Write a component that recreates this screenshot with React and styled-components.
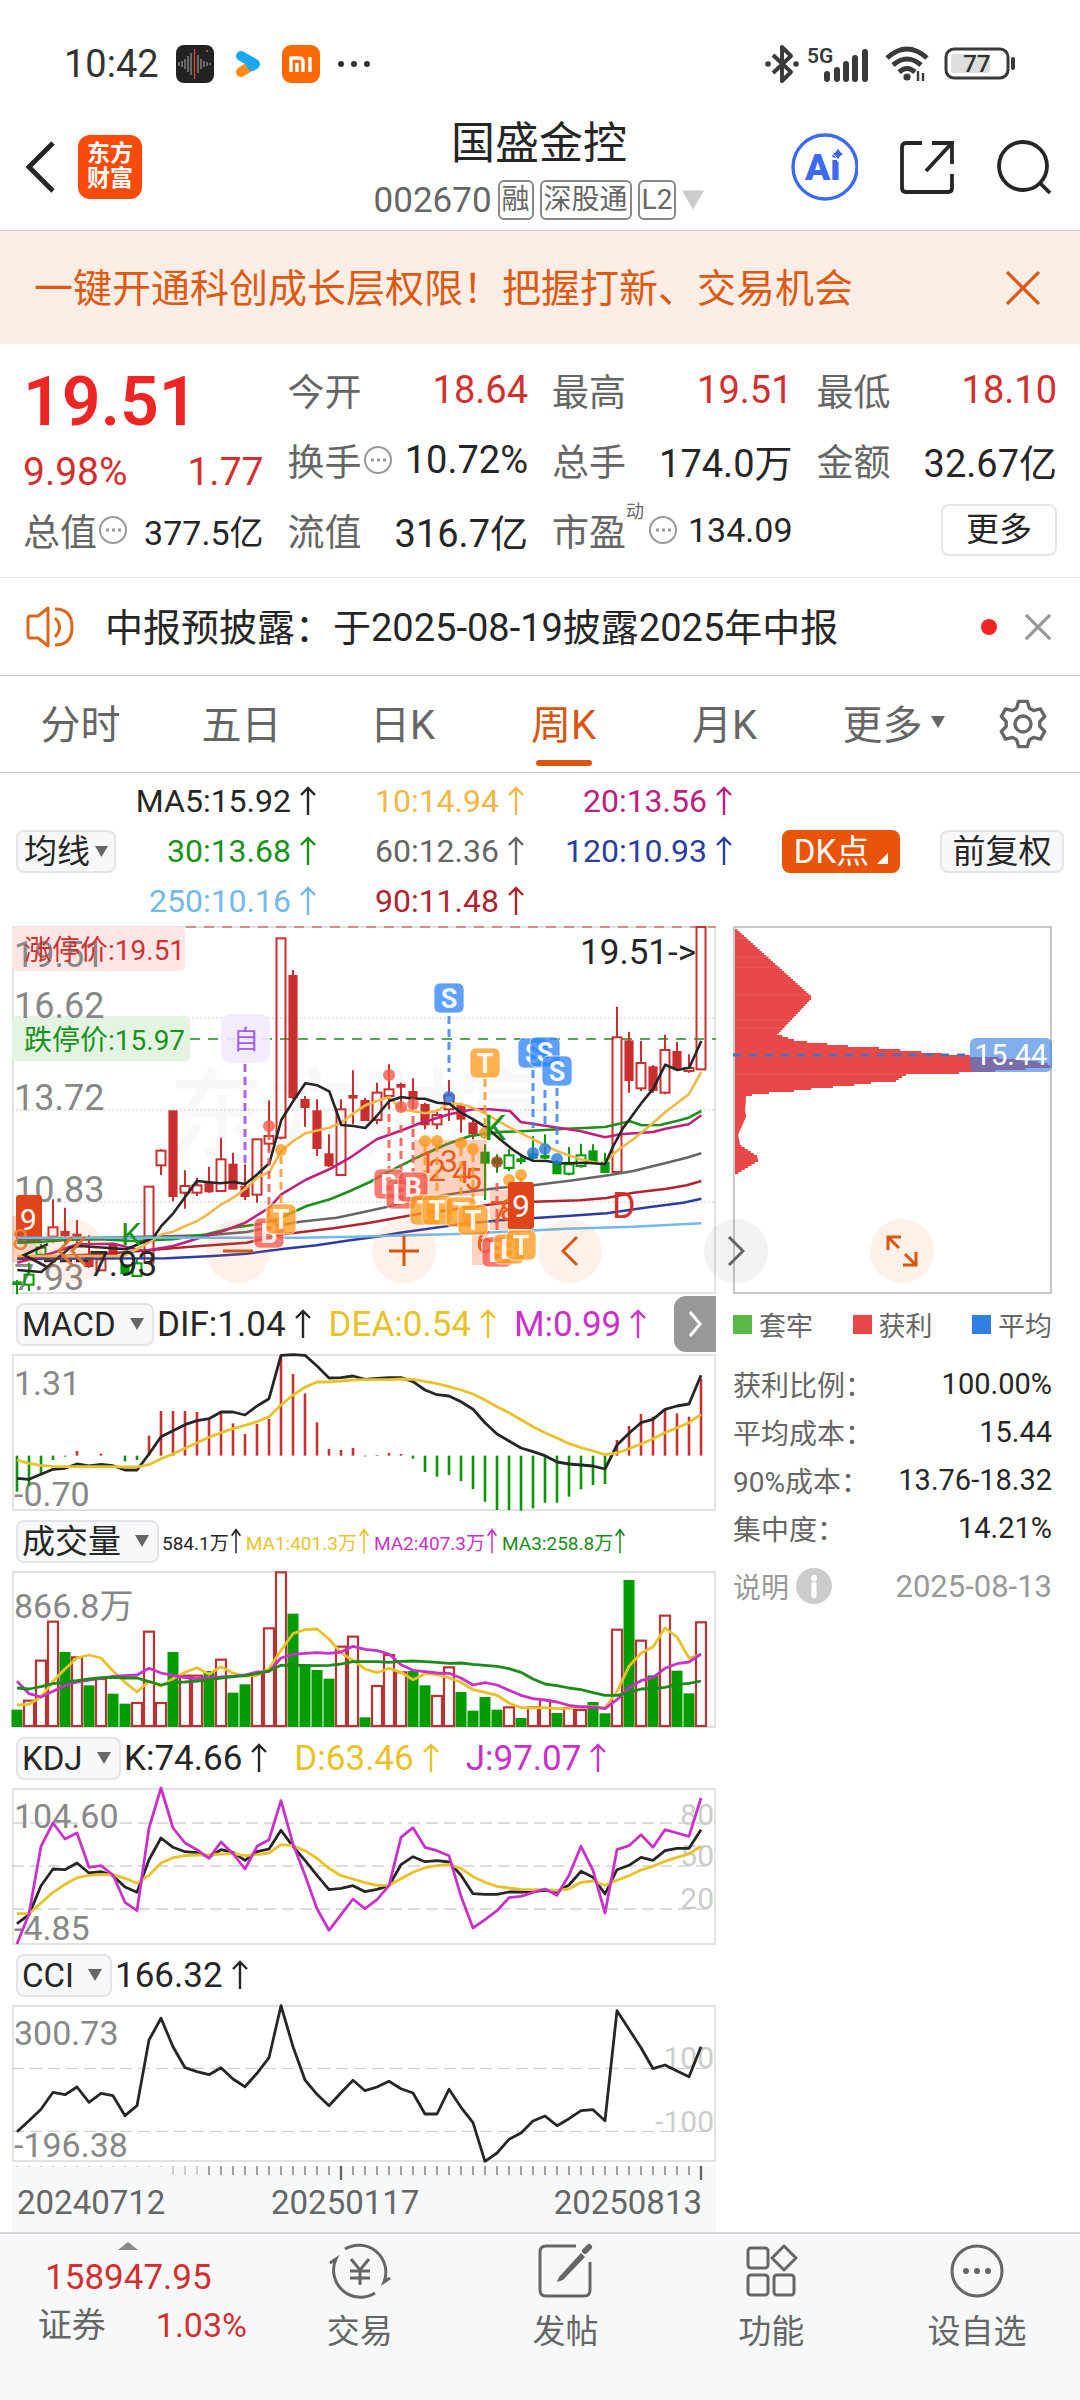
import React from 'react'

import styled, { createGlobalStyle } from 'styled-components';

const GlobalStyle = createGlobalStyle`
* { box-sizing: border-box; }
body {
  margin: 0;
  background: #fff;
  color: #262626;
  font-family: Roboto, "Noto Sans CJK SC", sans-serif;
}
button, select {
  margin: 0;
  padding: 0;
  border: 0;
  background: none;
  color: inherit;
  font: inherit;
  cursor: pointer;
}
svg { display: block; flex-shrink: 0; }
svg text { font-family: Roboto, "Noto Sans CJK SC", sans-serif; }
`;

/* ---------- status bar ---------- */

const StatusBar = styled.div`
display: flex;
justify-content: space-between;
align-items: center;
height: 104px;
padding: 24px 64px 0 64px;
font-size: 38px;
color: #333;
`;

const StatusGroup = styled.div`
display: flex;
align-items: center;
gap: ${p => p.$gap || 14}px;
`;

/* ---------- header ---------- */

const Header = styled.header`
display: grid;
grid-template-columns: 1fr auto 1fr;
align-items: center;
height: 127px;
padding: 0 28px 0 26px;
border-bottom: 1px solid #ccc;
`;

const HeaderSide = styled.div`
display: flex;
align-items: center;
gap: ${p => p.$gap}px;
justify-content: ${p => p.$end ? 'flex-end' : 'flex-start'};
`;

const Logo = styled.div`
width: 64px;
height: 64px;
padding-top: 6px;
border-radius: 12px;
background: #fb4b0a;
color: #fff;
font-size: 23px;
line-height: 25px;
font-weight: 700;
text-align: center;
`;

const TitleBlock = styled.div`
padding-top: 10px;
text-align: center;
`;

const Title = styled.h1`
margin: 0;
font-size: 44px;
line-height: 56px;
font-weight: 400;
`;

const Code = styled.div`
display: flex;
align-items: center;
gap: 6px;
height: 56px;
font-size: 35px;
color: #666;
`;

const Tag = styled.span`
padding: 0 2px;
border: 2px solid #888;
border-radius: 6px;
font-size: 28px;
line-height: 36px;
`;

const IconButton = styled.button`
display: flex;
align-items: center;
justify-content: center;
`;

/* ---------- banner ---------- */

const Banner = styled.div`
display: flex;
align-items: center;
justify-content: space-between;
height: 113px;
padding: 0 40px 0 34px;
background: #fceee6;
color: #dc5a12;
font-size: 39px;
span { padding-bottom: 5px; }
`;

/* ---------- quote ---------- */

const Quote = styled.section`
display: grid;
grid-template-columns: repeat(4, 1fr);
grid-auto-rows: 70px;
column-gap: 24px;
padding: 11px 23px 12px;
border-bottom: 1px solid #e8e8e8;
`;

const PriceBox = styled.div`
grid-row: span 2;
color: #d2302f;
font-size: 39px;
`;

const Price = styled.div`
font-size: 68px;
line-height: 94px;
font-weight: 600;
color: #ee2525;
`;

const Cell = styled.div`
display: flex;
align-items: center;
justify-content: space-between;
`;

const Label = styled.span`
display: flex;
align-items: center;
font-size: 37px;
color: #666;
`;

const Value = styled.span`
font-size: ${p => p.$small ? 34 : 38}px;
color: ${p => p.$red ? '#d2302f' : '#262626'};
white-space: nowrap;
`;

const Sup = styled.sup`
align-self: flex-start;
padding-right: 3px;
font-size: 18px;
line-height: 18px;
`;

const MoreButton = styled.button`
justify-self: end;
align-self: center;
width: 116px;
height: 52px;
border: 2px solid #e6e6e6;
border-radius: 8px;
font-size: 33px;
line-height: 46px;
`;

/* ---------- notice ---------- */

const Notice = styled.div`
display: flex;
align-items: center;
height: 98px;
padding: 0 29px 0 26px;
border-bottom: 1px solid #ccc;
font-size: 38px;
`;

const NoticeText = styled.span`
flex: 1;
padding: 0 0 5px 29px;
`;

const Dot = styled.i`
width: 16px;
height: 16px;
margin-right: 28px;
border-radius: 50%;
background: #ee2525;
`;

/* ---------- period tabs ---------- */

const Tabs = styled.nav`
display: flex;
height: 97px;
border-bottom: 1px solid #ccc;
`;

const Tab = styled.button`
position: relative;
display: flex;
flex: 1 1 161px;
align-items: center;
justify-content: center;
gap: 8px;
padding: 0 0 4px ${p => p.$more ? 16 : 0}px;
font-size: 40px;
color: ${p => p.$active ? '#d9560f' : '#666'};
${p => p.$active && `
&::after {
  content: '';
  position: absolute;
  bottom: 6px;
  width: 56px;
  height: 6px;
  border-radius: 3px;
  background: #d9560f;
}`}
`;

const GearTab = styled(IconButton)`
flex: 1 1 114px;
`;

/* ---------- moving averages ---------- */

const MaRow = styled.div`
display: flex;
align-items: center;
padding: 3px 16px 0 16px;
`;

const MaGrid = styled.div`
display: grid;
grid-template-columns: 200px 208px 208px;
grid-auto-rows: 50px;
justify-items: end;
`;

const Figure = styled.span`
display: flex;
align-items: center;
gap: ${p => p.$size < 30 ? 2 : 9}px;
font-size: ${p => p.$size}px;
color: ${p => p.$color};
white-space: nowrap;
`;

const PickerBox = styled.label`
display: flex;
align-items: center;
gap: ${p => p.$tight ? 5 : 14}px;
height: 43px;
padding: 0 ${p => p.$tight ? 6 : 8}px 0 ${p => p.$tight ? 6 : 4}px;
border: 2px solid #e2e4e8;
border-radius: 8px;
background: #f7f8fa;
font-size: 33px;
select {
  appearance: none;
  line-height: 39px;
  height: 39px;
}
`;

const ChipButton = styled.button`
display: flex;
align-items: center;
justify-content: center;
gap: 8px;
width: ${p => p.$width}px;
height: 43px;
margin-left: ${p => p.$push || '50px'};
border: 2px solid ${p => p.$solid ? '#e8550a' : '#e2e4e8'};
border-radius: 8px;
background: ${p => p.$solid ? '#e8550a' : '#f7f8fa'};
color: ${p => p.$solid ? '#fff' : '#262626'};
font-size: 33px;
line-height: 39px;
`;

/* ---------- charts ---------- */

const ChartArea = styled.main`
position: relative;
display: grid;
grid-template-columns: 704fr 319fr;
column-gap: 17px;
padding: 0 28px 0 12px;
`;

const Chart = styled.svg`
width: 100%;
height: auto;
overflow: visible;
`;

const PanelHead = styled.div`
display: flex;
align-items: center;
height: 60px;
padding-left: 4px;
`;

const PanelFigures = styled.div`
display: flex;
flex: 1;
gap: ${p => p.$gap}px;
padding-left: 3px;
`;

const NextTab = styled.button`
display: flex;
align-items: center;
justify-content: center;
width: 42px;
height: 56px;
border-radius: 12px 0 0 12px;
background: #989898;
`;

const Axis = styled.div`
margin-top: 4px;
height: 66px;
background: #f7f8fa;
`;

const Dates = styled.div`
display: grid;
grid-template-columns: 254fr 190fr 241fr;
padding: 0 14px 0 5px;
font-size: 33px;
line-height: 38px;
color: #666;
span:last-child { justify-self: end; }
`;

const Controls = styled.div`
position: absolute;
top: 293px;
left: 40px;
display: flex;
gap: 102px;
`;

const RoundButton = styled.button`
display: flex;
align-items: center;
justify-content: center;
width: 64px;
height: 64px;
border-radius: 50%;
background: ${p => p.$gray ? 'rgba(90,90,90,.08)' : 'rgba(255,110,40,.1)'};
color: ${p => p.$gray ? '#666' : '#d9560f'};
`;

const ChipLegend = styled.div`
display: flex;
justify-content: space-between;
align-items: center;
height: 60px;
font-size: 27px;
color: #666;
span { display: flex; align-items: center; gap: 7px; }
`;

const Swatch = styled.i`
width: 19px;
height: 19px;
background: ${p => p.$color};
`;

const StatRow = styled.div`
display: flex;
justify-content: space-between;
align-items: center;
height: ${p => p.$last ? 68 : 48}px;
font-size: 28px;
color: ${p => p.$last ? '#999' : '#666'};
b {
  font-size: ${p => p.$last ? 31 : 29}px;
  font-weight: 400;
  color: ${p => p.$last ? '#999' : '#262626'};
}
span { display: flex; align-items: center; gap: 7px; }
`;

const Stats = styled.div`
padding-top: 6px;
`;

/* ---------- bottom bar ---------- */

const BottomBar = styled.footer`
display: flex;
height: 168px;
border-top: 2px solid #d5d7da;
background: #f7f8fa;
color: #666;
`;

const IndexBox = styled.button`
display: flex;
flex: 257;
flex-direction: column;
align-items: center;
padding-top: 8px;
font-size: 35px;
color: #d2302f;
`;

const IndexLine = styled.span`
display: flex;
gap: 50px;
padding-left: 28px;
font-size: 34px;
line-height: 48px;
em { font-style: normal; color: #666; }
`;

const IndexValue = styled.span`
line-height: 46px;
margin-top: 5px;
`;

const BottomItem = styled.button`
display: flex;
flex: 206;
flex-direction: column;
align-items: center;
padding-top: 8px;
font-size: 33px;
line-height: 48px;
svg { margin-bottom: 8px; }
`;

/* ---------- small icons ---------- */

const Up = ({ small }) => (
  <svg width={small ? 10 : 16} height={small ? 26 : 30} viewBox="0 0 16 30" preserveAspectRatio="none" fill="none" stroke="currentColor" strokeWidth="2.4">
    <path d="M8 29V2M1 9L8 2L15 9" />
  </svg>
);

const Down = ({ w = 14, color = '#666' }) => (
  <svg width={w} height={w} viewBox="0 0 14 14" fill={color}><path d="M0 1H14L7 13Z" /></svg>
);

const Cross = ({ size, color, width = 3 }) => (
  <svg width={size} height={size} viewBox="0 0 32 32" stroke={color} strokeWidth={width}><path d="M1 1L31 31M31 1L1 31" /></svg>
);

const Bubble = () => (
  <svg width="30" height="30" viewBox="0 0 30 30" fill="none" stroke="#999" strokeWidth="2">
    <circle cx="16" cy="15" r="13" />
    <path d="M9 15h3M15 15h3M21 15h3" strokeWidth="3" />
  </svg>
);

// six flat teeth round a small ring
const gearPath = () => {
  const pts = [];
  for (let k = 0; k < 6; k++) {
    [[-22, 17], [-11, 23], [11, 23], [22, 17]].forEach(([d, r]) => {
      const a = (k * 60 - 90 + d) * Math.PI / 180;
      pts.push((26 + r * Math.cos(a)).toFixed(1) + ' ' + (26 + r * Math.sin(a)).toFixed(1));
    });
  }
  return 'M' + pts.join('L') + 'Z';
};

const Gear = () => (
  <svg width="52" height="52" viewBox="0 0 52 52" fill="none" stroke="#666" strokeWidth="3.4" strokeLinejoin="round">
    <path d={gearPath()} />
    <circle cx="26" cy="26" r="8" />
  </svg>
);

const Picker = ({ name, tight }) => (
  <PickerBox $tight={tight}>
    <select aria-label={name}><option>{name}</option></select>
    <Down w={tight ? 13 : 14} />
  </PickerBox>
);

/* ---------- chart data ---------- */

const X0 = 5;
const STEP = 12;
const barX = i => X0 + i * STEP;

const scale = top => v => (v - top) / 3;

const linePoints = (values, y) => values.map((v, i) => barX(i) + ',' + y(v).toFixed(1)).join(' ');

// kind, high, open/close top, open/close bottom, low
const candles = [
  ['g', 1112, 1119, 1124, 1155], ['h', 1060, 1096, 1126, 1145], ['h', 1005, 1015, 1036, 1050],
  ['u', 870, 954, 982, 1000], ['f', 895, 968, 978, 1000], ['f', 932, 976, 990, 1002],
  ['f', 978, 1040, 1070, 1075], ['u', 1030, 1050, 1083, 1083], ['f', 1000, 1010, 1034, 1050],
  ['g', 1064, 1068, 1092, 1092], ['h', 1050, 1062, 1100, 1100], ['u', 832, 832, 1060, 1060],
  ['u', 720, 724, 768, 797], ['f', 605, 606, 860, 876], ['u', 783, 830, 850, 898],
  ['u', 805, 828, 850, 860], ['f', 772, 822, 846, 850], ['u', 685, 750, 845, 845],
  ['f', 730, 766, 838, 838], ['f', 765, 832, 860, 872], ['u', 690, 690, 856, 880],
  ['u', 573, 680, 703, 725], ['u', 87, 87, 685, 690], ['f', 182, 200, 563, 570],
  ['f', 560, 572, 593, 652], ['f', 570, 606, 716, 740], ['f', 675, 735, 768, 772],
  ['u', 570, 600, 797, 800], ['f', 483, 560, 565, 645], ['f', 565, 575, 632, 635],
  ['u', 520, 550, 632, 645], ['u', 465, 540, 560, 600], ['f', 520, 527, 532, 600],
  ['f', 507, 548, 568, 600], ['f', 580, 587, 645, 660], ['u', 600, 617, 645, 660],
  ['u', 512, 558, 600, 635], ['f', 580, 590, 628, 670], ['f', 630, 642, 672, 690],
  ['g', 705, 730, 760, 872], ['g', 735, 750, 762, 790], ['h', 720, 738, 776, 785],
  ['g', 740, 750, 755, 765], ['g', 680, 735, 745, 750], ['g', 675, 740, 745, 750],
  ['g', 752, 760, 792, 792], ['h', 713, 765, 793, 798], ['h', 703, 738, 770, 775],
  ['g', 705, 726, 756, 756], ['g', 730, 760, 788, 788], ['u', 292, 384, 788, 788],
  ['f', 368, 396, 512, 550], ['u', 395, 461, 537, 545], ['f', 468, 474, 542, 550],
  ['u', 376, 422, 550, 555], ['f', 398, 428, 475, 480], ['u', 435, 476, 485, 490],
  ['u', 53, 53, 480, 480],
];

const averages = [
  ['#2b3ea0', '52,1048 500,1047 640,1040 740,1033 840,1020 950,1008 1050,993 1130,982 1200,970 1380,945 1500,933 1700,920 1820,912 1950,893 2050,880 2104,868'],
  ['#b0242f', '52,1045 300,1035 480,1020 600,1010 740,1000 850,975 1000,957 1110,940 1250,915 1400,895 1500,882 1600,877 1740,873 1820,866 1900,850 2000,838 2060,828 2104,815'],
  ['#666', '52,990 300,985 620,978 740,968 840,948 900,937 1010,925 1060,915 1150,895 1250,870 1380,850 1500,835 1600,828 1720,813 1830,797 1900,785 2000,760 2060,745 2104,732'],
  ['#1a921a', '52,1000 124,997 200,992 300,990 400,995 520,990 620,975 700,955 808,940 880,908 920,890 990,870 1050,845 1110,818 1150,795 1250,745 1340,705 1410,680 1500,668 1580,665 1700,658 1815,653 1890,636 1925,648 1980,647 2030,635 2066,625 2104,605'],
  ['#c0207c', '52,1060 160,1030 232,1005 340,1003 430,1025 520,1010 600,985 670,965 736,940 808,895 844,855 916,812 988,780 1050,745 1130,690 1200,665 1260,642 1348,615 1420,600 1470,600 1530,605 1562,638 1640,650 1740,665 1815,684 1860,675 1960,668 1996,658 2066,645 2104,618'],
  ['#f0b848', '52,1040 370,1040 430,1010 484,975 520,967 556,950 592,935 628,912 664,885 700,865 736,838 772,805 808,788 844,725 880,695 916,672 988,655 1024,640 1060,612 1096,588 1132,575 1168,563 1204,600 1276,612 1310,605 1348,583 1384,585 1420,595 1460,615 1530,655 1600,690 1670,725 1740,750 1810,765 1850,725 1900,690 1960,640 2000,605 2066,555 2104,488'],
  ['#262626', '52,1082 124,1088 210,1015 240,1010 380,1020 460,985 484,950 520,912 556,862 590,815 660,822 700,818 736,824 772,795 808,762 844,632 880,575 916,522 952,528 988,546 1024,647 1060,650 1096,656 1130,620 1168,575 1204,563 1240,568 1275,568 1312,580 1348,583 1384,610 1420,630 1460,655 1500,690 1540,722 1570,742 1600,754 1640,755 1680,762 1760,760 1815,765 1840,710 1870,655 1925,580 1960,538 1996,466 2032,482 2068,475 2104,395'],
  ['#74b9ea', '52,985 900,985 1060,982 1400,973 1500,968 1700,958 1900,952 2104,942'],
];

// trade marks: letter, x, y of the badge, colour
const marks = [
  ['B', 257, 307, '#f4574a'], ['T', 269, 293, '#ff9a1f'],
  ['B', 377, 258, '#f4574a'], ['B', 389, 268, '#f4574a'], ['B', 401, 261, '#f4574a'],
  ['T', 413, 284, '#ff9a1f'], ['T', 425, 284, '#ff9a1f'], ['T', 449, 286, '#ff9a1f'], ['T', 461, 294, '#ff9a1f'],
  ['T', 473, 137, '#ff9a1f'], ['S', 437, 72, '#3286f8'],
  ['S', 521, 127, '#3286f8'], ['S', 533, 126, '#3286f8'], ['S', 545, 145, '#3286f8'],
  ['B', 485, 326, '#f4574a'], ['B', 497, 323, '#ff9a1f'], ['T', 509, 319, '#ff9a1f'],
];

// stems of the marks: x, top, bottom, colour
const stems = [
  [233, 138, 240, '#9a4be8'], [257, 206, 292, '#e8574c'], [269, 230, 278, '#f59a2a'],
  [377, 188, 243, '#e8574c'], [389, 199, 253, '#e8574c'], [401, 190, 246, '#e8574c'],
  [413, 218, 269, '#f59a2a'], [425, 218, 269, '#f59a2a'], [449, 222, 271, '#f59a2a'], [461, 228, 279, '#f59a2a'],
  [437, 90, 146, '#3a86e8'], [473, 153, 210, '#f59a2a'],
  [521, 144, 202, '#3a86e8'], [533, 164, 202, '#3a86e8'], [545, 162, 218, '#3a86e8'],
  [485, 257, 311, '#e8574c'], [497, 256, 308, '#f59a2a'], [509, 252, 304, '#f59a2a'],
];

const dots = [
  [257, 200, '#f4574a'], [269, 224, '#ff9a1f'], [377, 149, '#f4574a'], [389, 181, '#f4574a'], [401, 178, '#f4574a'],
  [437, 171, '#2a6fe0'], [413, 215, '#ff9a1f'], [425, 215, '#ff9a1f'], [449, 217, '#ff9a1f'], [461, 223, '#ff9a1f'],
  [473, 207, '#e0951f'], [485, 236, '#a84a20'], [521, 227, '#2a7ae0'], [533, 223, '#2a7ae0'], [545, 233, '#2a7ae0'],
  [497, 254, '#ff9a1f'], [509, 249, '#ff9a1f'],
];

const macd = {
  bars: [605, 588, 552, 510, 500, 483, 497, 491, 497, 514, 510, 437, 363, 363, 363, 366, 385, 370, 400, 432, 402, 387, 200, 252, 310, 397, 477, 480, 474, 499, 495, 489, 492, 506, 546, 560, 555, 573, 597, 635, 660, 660, 662, 655, 638, 638, 620, 598, 585, 582, 450, 408, 372, 380, 358, 370, 380, 266],
  dif: [565, 568, 553, 538, 535, 522, 528, 523, 527, 540, 540, 492, 440, 422, 404, 392, 386, 366, 366, 375, 348, 326, 196, 194, 196, 228, 264, 263, 258, 268, 265, 263, 263, 275, 300, 314, 318, 335, 358, 398, 432, 453, 474, 485, 497, 516, 522, 525, 528, 537, 465, 430, 398, 388, 358, 348, 342, 256],
  dea: [510, 520, 526, 529, 530, 530, 530, 530, 530, 531, 531, 524, 506, 492, 475, 458, 442, 428, 416, 406, 395, 380, 345, 315, 292, 276, 276, 273, 270, 269, 269, 269, 267, 268, 274, 281, 290, 300, 312, 330, 350, 368, 389, 410, 428, 444, 461, 473, 483, 494, 489, 476, 462, 446, 428, 413, 398, 373],
};

const volume = {
  kinds: 'grrrgrgrggrrrgrrgrggrrrgggg' + 'rrgrrrggrrgggg' + 'rgrrgrrgg' + 'rgrgrggr',
  tops: [600, 570, 450, 333, 427, 440, 527, 505, 552, 582, 577, 363, 577, 427, 495, 495, 484, 447, 549, 524, 490, 353, 185, 312, 463, 481, 507, 408, 378, 623, 526, 433, 485, 484, 527, 556, 470, 547, 603, 562, 600, 590, 625, 590, 568, 610, 592, 598, 577, 611, 357, 211, 390, 497, 315, 483, 551, 335],
  ma1: [586, 584, 562, 515, 478, 445, 436, 445, 484, 518, 547, 515, 530, 507, 488, 474, 494, 471, 490, 500, 497, 477, 422, 372, 360, 358, 388, 430, 452, 478, 489, 476, 488, 510, 492, 495, 504, 518, 540, 548, 557, 580, 594, 595, 594, 597, 596, 590, 590, 595, 545, 470, 430, 412, 355, 382, 445, 435],
  ma2: [515, 552, 562, 545, 528, 517, 511, 506, 500, 498, 496, 476, 490, 497, 504, 507, 503, 502, 500, 496, 487, 486, 445, 434, 431, 429, 431, 427, 410, 419, 423, 433, 465, 482, 486, 490, 491, 505, 526, 519, 526, 542, 557, 567, 571, 577, 587, 592, 592, 597, 570, 534, 513, 503, 476, 462, 457, 433],
  ma3: [535, 538, 531, 522, 517, 513, 508, 504, 503, 505, 505, 516, 526, 518, 517, 514, 510, 505, 501, 498, 492, 484, 467, 466, 468, 468, 467, 463, 456, 456, 456, 458, 455, 454, 456, 458, 461, 460, 464, 467, 470, 477, 488, 508, 523, 528, 535, 540, 549, 557, 557, 549, 538, 536, 533, 524, 521, 514],
};

const kdj = {
  k: [582, 555, 468, 418, 420, 400, 430, 426, 438, 472, 488, 390, 325, 353, 366, 369, 382, 360, 368, 392, 366, 358, 302, 350, 392, 437, 480, 476, 468, 486, 479, 468, 405, 381, 396, 393, 397, 437, 492, 494, 494, 487, 487, 486, 482, 486, 466, 425, 443, 493, 420, 407, 383, 392, 363, 356, 356, 300],
  d: [552, 552, 520, 488, 464, 444, 437, 434, 435, 446, 461, 437, 400, 384, 378, 376, 376, 373, 372, 378, 375, 370, 345, 348, 363, 386, 416, 438, 448, 459, 467, 467, 447, 428, 414, 408, 404, 416, 441, 458, 470, 475, 479, 480, 480, 482, 478, 458, 454, 467, 452, 438, 421, 410, 395, 383, 373, 350],
  j: [643, 552, 350, 280, 328, 310, 413, 408, 436, 518, 543, 295, 175, 295, 340, 360, 386, 337, 372, 418, 350, 330, 213, 343, 437, 537, 602, 555, 508, 537, 510, 468, 323, 294, 353, 363, 378, 500, 595, 570, 543, 504, 500, 488, 478, 497, 437, 350, 422, 550, 360, 348, 315, 353, 300, 310, 320, 205],
};

const cci = [545, 512, 478, 427, 434, 411, 457, 430, 437, 497, 467, 270, 205, 290, 353, 365, 374, 353, 387, 410, 370, 323, 167, 290, 390, 433, 467, 428, 391, 422, 411, 394, 416, 429, 492, 492, 418, 472, 518, 634, 609, 568, 549, 513, 498, 527, 506, 482, 479, 512, 182, 238, 293, 356, 345, 363, 380, 290];

// cost distribution outline: [y, width]
const chips = [
  [0, 1], [70, 79], [107, 44], [111, 55], [114, 64], [116, 84], [119, 115], [121, 146], [124, 178], [127, 209], [129, 237], [132, 280],
  [136, 313], [139, 318], [142, 280], [145, 226], [146, 175], [150, 167], [153, 163], [155, 138], [158, 113], [160, 87], [163, 61],
  [165, 36], [167, 19], [169, 13], [183, 12], [189, 13], [207, 5], [218, 7], [229, 24], [233, 25], [247, 2], [272, 0],
];

const chipWidth = y => {
  for (let i = 1; i < chips.length; i++) {
    const [y0, w0] = chips[i - 1];
    const [y1, w1] = chips[i];
    if (y <= y1) return w0 + (w1 - w0) * (y - y0) / (y1 - y0);
  }
  return 0;
};

/* ---------- chart components ---------- */

const Frame = ({ h, color = '#e2e2e2' }) => (
  <rect x="1" y="1" width="702" height={h - 2} fill="none" stroke={color} strokeWidth="2" />
);

const Candle = ({ i, data }) => {
  const [kind, hi, top, bot, lo] = data;
  const y = scale(50);
  const color = kind === 'u' || kind === 'f' ? '#c83030' : '#009c00';
  const hollow = kind === 'u' || kind === 'h';
  const x = barX(i);
  return (
    <g stroke={color} strokeWidth="2" fill={hollow ? 'none' : color}>
      <path d={`M${x} ${y(hi)}V${y(top)}M${x} ${y(bot)}V${y(lo)}`} />
      <rect x={x - (hollow ? 4.5 : 3.6)} y={y(top)} width={hollow ? 9 : 7.2} height={y(bot) - y(top)} />
    </g>
  );
};

const MainChart = () => {
  const y = scale(50);
  const toPoints = s => s.split(' ').map(p => {
    const [a, b] = p.split(',');
    return ((a - 36) / 3).toFixed(1) + ',' + y(b).toFixed(1);
  }).join(' ');
  return (
    <Chart viewBox="0 0 704 368">
      <text x="157" y="222" fontSize="96" fontWeight="500" fill="#f8f8f8">东方财富</text>
      <Frame h={368} />
      {[92, 184, 276].map(v => <path key={v} d={`M0 ${v}H704`} stroke="#ddd" strokeWidth="1.5" strokeDasharray="2 2" />)}
      <path d="M174 1H704" stroke="#d87070" strokeWidth="1.6" strokeDasharray="10 8" />
      <path d="M178 113H704" stroke="#1a921a" strokeWidth="1.4" strokeDasharray="10 8" />
      <rect x="0" y="1" width="173" height="44" rx="5" fill="#fee6e6" />
      <rect x="0" y="90" width="178" height="45" rx="5" fill="#e3f4e3" />
      <g fontSize="36" fill="#888">
        <text x="2" y="41">19.51</text>
        <text x="2" y="92">16.62</text>
        <text x="2" y="184">13.72</text>
        <text x="2" y="276">10.83</text>
        <text x="2" y="364">7.93</text>
      </g>
      <text x="12" y="34" fontSize="28" fill="#d2302f">涨停价:19.51</text>
      <text x="12" y="124" fontSize="28" fill="#1a921a">跌停价:15.97</text>
      <rect x="209" y="88" width="49" height="49" rx="10" fill="#f3eafe" fillOpacity=".9" />
      <text x="221" y="123" fontSize="26" fill="#a060e8">自</text>
      <rect x="0" y="290" width="30" height="46" fill="#f77038" fillOpacity=".3" />
      <rect x="4" y="269" width="26" height="47" rx="3" fill="#df4519" />
      <text x="8" y="304" fontSize="30" fill="#fff">9</text>
      <text x="0" y="324" fontSize="30" fill="#f08038">8</text>

      {candles.map((c, i) => <Candle key={i} i={i} data={c} />)}
      {averages.map(([color, pts]) => <polyline key={color} points={toPoints(pts)} fill="none" stroke={color} strokeWidth="2.6" strokeLinejoin="round" />)}

      <rect x="402" y="214" width="73" height="56" fill="#f77038" fillOpacity=".32" />
      <rect x="478" y="264" width="22" height="40" fill="#f77038" fillOpacity=".3" />
      <rect x="460" y="308" width="16" height="31" fill="#f77038" fillOpacity=".3" />
      <g fontSize="32" fill="#ee5a1c">
        <text x="406" y="247">1</text>
        <text x="416" y="255">2</text>
        <text x="428" y="246">3</text>
        <text x="440" y="257">4</text>
        <text x="452" y="264">5</text>
        <text x="464" y="327">6</text>
        <text x="478" y="297">7</text>
        <text x="488" y="295">8</text>
      </g>
      {stems.map(([x, a, b, color]) => <path key={x + color} d={`M${x} ${a}V${b}`} stroke={color} strokeOpacity=".85" strokeWidth="3" strokeDasharray="8 5" />)}
      {dots.map(([x, cy, color], i) => <circle key={i} cx={x} cy={cy} r="6" fill={color} fillOpacity=".8" />)}
      {marks.map(([letter, x, cy, color], i) => (
        <g key={i}>
          <rect x={x - 15} y={cy - 15} width="30" height="30" rx="6" fill={color} fillOpacity=".78" stroke="#fff" strokeOpacity=".7" />
          <text x={x} y={cy + 10} fontSize="27" fontWeight="700" textAnchor="middle" fill="#fff" fillOpacity=".92">{letter}</text>
        </g>
      ))}
      <rect x="496" y="256" width="26" height="47" rx="3" fill="#df4519" />
      <text x="500" y="291" fontSize="32" fill="#fff">9</text>

      <path d="M36 318L12 329L35 341" fill="none" stroke="#262626" strokeWidth="2.6" />
      <path d="M32 335H78" stroke="#262626" strokeWidth="2.6" strokeDasharray="12 4" />
      <text x="77" y="350" fontSize="35" fill="#262626">7.93</text>
      <text x="109" y="319" fontSize="32" fill="#1a921a">K</text>
      <text x="472" y="214" fontSize="35" fill="#1a921a">K</text>
      <text x="600" y="292" fontSize="36" fill="#d2302f">D</text>
      <text x="684" y="38" fontSize="35" textAnchor="end" fill="#262626">{'19.51->'}</text>
    </Chart>
  );
};

const Line = ({ values, y, color, width = 2.8 }) => (
  <polyline points={linePoints(values, y)} fill="none" stroke={color} strokeWidth={width} strokeLinejoin="round" />
);

const MacdChart = () => {
  const y = scale(192);
  return (
    <Chart viewBox="0 0 704 157">
      <Frame h={157} />
      <text x="2" y="41" fontSize="34" fill="#888">1.31</text>
      <text x="2" y="152" fontSize="34" fill="#888">-0.70</text>
      {macd.bars.map((v, i) => <path key={i} d={`M${barX(i)} ${y(497)}V${y(v)}`} stroke={v < 497 ? '#c83232' : '#0a940a'} strokeWidth="2.6" />)}
      <Line values={macd.dif} y={y} color="#262626" />
      <Line values={macd.dea} y={y} color="#e8c22a" />
    </Chart>
  );
};

const VolumeChart = () => {
  const y = scale(184);
  return (
    <Chart viewBox="0 0 704 157">
      <Frame h={157} />
      <text x="2" y="47" fontSize="34" fill="#888">866.8万</text>
      {volume.tops.map((v, i) => volume.kinds[i] === 'g'
        ? <rect key={i} x={barX(i) - 5.5} y={y(v)} width="11" height={156 - y(v)} fill="#009c00" />
        : <rect key={i} x={barX(i) - 5} y={y(v) + 1} width="10" height={154 - y(v)} fill="#fff" stroke="#b83434" strokeWidth="2.2" />)}
      <Line values={volume.ma1} y={y} color="#e8c22a" />
      <Line values={volume.ma2} y={y} color="#c832c8" />
      <Line values={volume.ma3} y={y} color="#1a8c1a" />
    </Chart>
  );
};

const KdjChart = () => {
  const y = scale(175);
  return (
    <Chart viewBox="0 0 704 157">
      <Frame h={157} />
      {[280, 409, 538].map(v => <path key={v} d={`M0 ${y(v)}H704`} stroke="#d2d2d2" strokeWidth="1.4" strokeDasharray="12 6" />)}
      <g fontSize="30" fill="#ccc" textAnchor="end">
        <text x="702" y="37">80</text>
        <text x="702" y="78">50</text>
        <text x="702" y="121">20</text>
      </g>
      <text x="2" y="40" fontSize="34" fill="#888">104.60</text>
      <text x="2" y="152" fontSize="34" fill="#888">-4.85</text>
      <Line values={kdj.k} y={y} color="#262626" />
      <Line values={kdj.d} y={y} color="#e8c22a" />
      <Line values={kdj.j} y={y} color="#c832c8" />
    </Chart>
  );
};

const CciChart = () => {
  const y = scale(165);
  return (
    <Chart viewBox="0 0 704 157">
      <Frame h={157} />
      {[355, 544].map(v => <path key={v} d={`M0 ${y(v)}H704`} stroke="#d2d2d2" strokeWidth="1.4" strokeDasharray="12 6" />)}
      <g fontSize="30" fill="#ccc" textAnchor="end">
        <text x="702" y="63">100</text>
        <text x="702" y="127">-100</text>
      </g>
      <text x="2" y="40" fontSize="34" fill="#888">300.73</text>
      <text x="2" y="152" fontSize="34" fill="#888">-196.38</text>
      <Line values={cci} y={y} color="#262626" />
    </Chart>
  );
};

const Ticks = () => (
  <Chart viewBox="0 0 704 18">
    {cci.map((v, i) => {
      const major = i === 27 || i === 57;
      return <path key={i} d={`M${barX(i)} 0V${major ? 14 : i < 13 ? 1 : 9}`} stroke={major ? '#666' : '#888'} strokeOpacity={i < 16 ? .45 : 1} strokeWidth={major ? 2.4 : 1.6} />;
    })}
  </Chart>
);

const ChipChart = () => {
  const rows = [];
  for (let y = 1; y < 272; y += 2) rows.push(y);
  return (
    <Chart viewBox="0 0 319 368">
      {rows.map(y => <rect key={y} x="0" y={y} width={chipWidth(y)} height="3" fill="#e84848" />)}
      {[12, 31, 41, 69, 94, 102, 148].map(y => <path key={y} d={`M1 ${y}H${chipWidth(y)}`} stroke="#ee6a6a" strokeWidth=".6" />)}
      <rect x="1" y="1" width="317" height="366" fill="none" stroke="#c8c8c8" strokeWidth="2" />
      <path d="M0 129H237" stroke="#4a70c0" strokeWidth="3" strokeDasharray="8 8" />
      <rect x="237" y="112" width="82" height="34" rx="6" fill="#3c82e0" fillOpacity=".64" />
      <text x="278" y="139" fontSize="29" textAnchor="middle" fill="#fff">15.44</text>
    </Chart>
  );
};

const Panel = ({ name, figures, gap = 18, tight, next, children }) => (
  <section>
    <PanelHead>
      <Picker name={name} />
      <PanelFigures $gap={gap}>
        {figures.map(([text, color]) => (
          <Figure key={text} $color={color} $size={tight ? 19 : 35}>{text}<Up small={tight} /></Figure>
        ))}
      </PanelFigures>
      {next && (
        <NextTab aria-label="next">
          <svg width="14" height="28" viewBox="0 0 14 28" fill="none" stroke="#fff" strokeWidth="3"><path d="M2 2L12 14L2 26" /></svg>
        </NextTab>
      )}
    </PanelHead>
    {children}
  </section>
);

const maItems = [
  ['MA5:15.92', '#262626'], ['10:14.94', '#f0b848'], ['20:13.56', '#c0207c'],
  ['30:13.68', '#1a921a'], ['60:12.36', '#666'], ['120:10.93', '#2b3ea0'],
  ['250:10.16', '#74b9ea'], ['90:11.48', '#b0242f'],
];

const statItems = [['获利比例：', '100.00%'], ['平均成本：', '15.44'], ['90%成本：', '13.76-18.32'], ['集中度：', '14.21%']];

/* ---------- page parts ---------- */

const Status = () => (
  <StatusBar>
    <StatusGroup $gap={17}>
      <span>10:42</span>
      <svg width="38" height="38" viewBox="0 0 38 38">
        <rect width="38" height="38" rx="8" fill="#222" />
        <path d="M3 17v4M6 16v6M9 14v10M12 11v16M15 8v22M22 10v18M25 14v10M28 16v6M31 17v4M34 18v2" stroke="#999" strokeWidth="1.2" />
        <path d="M18.5 4v30" stroke="#d84030" strokeWidth="1.4" />
        <circle cx="31" cy="6" r="1.2" fill="#d84030" />
      </svg>
      <svg width="34" height="38" viewBox="0 0 34 38" fill="none" strokeLinecap="round" strokeLinejoin="round" strokeWidth="10">
        <path d="M10 27L18 22" stroke="#ff8a14" />
        <path d="M10 11L24 19L21 21" stroke="#18a8f4" />
      </svg>
      <svg width="38" height="38" viewBox="0 0 38 38">
        <rect width="38" height="38" rx="9" fill="#ff6a00" />
        <path d="M9 27V13H17Q21 13 21 17V27M15 18V27M28 12V27" fill="none" stroke="#fff" strokeWidth="3.4" />
      </svg>
      <svg width="34" height="8" viewBox="0 0 34 8" fill="#333"><circle cx="4" cy="4" r="3" /><circle cx="17" cy="4" r="3" /><circle cx="30" cy="4" r="3" /></svg>
    </StatusGroup>
    <StatusGroup $gap={14}>
      <svg width="106" height="44" viewBox="0 -2 106 44" fill="none" stroke="#3a3a3a" strokeWidth="4">
        <path d="M9 11L27 28L18 37V3L27 12L9 29" strokeLinejoin="round" />
        <circle cx="4" cy="20" r="2.8" fill="#3a3a3a" stroke="none" />
        <circle cx="32" cy="20" r="2.8" fill="#3a3a3a" stroke="none" />
        <text x="43" y="19" fontSize="21" fontWeight="600" fill="#3a3a3a" stroke="none">5G</text>
        <path d="M63 30V35M73 26V35M82 20V35M91 14V35M101 8V35" strokeWidth="6" strokeLinecap="round" />
      </svg>
      <svg width="46" height="40" viewBox="0 0 46 40" fill="none" stroke="#3a3a3a" strokeWidth="5">
        <path d="M3 14Q23 -4 43 14M9 21Q23 9 37 21M15 28Q23 21 31 28" />
        <circle cx="23" cy="33" r="3.6" fill="#3a3a3a" stroke="none" />
        <path d="M34 27v10M39 29v8" strokeWidth="2.4" />
      </svg>
      <svg width="72" height="34" viewBox="0 0 72 34">
        <rect x="2" y="2" width="62" height="29" rx="8" fill="none" stroke="#3a3a3a" strokeWidth="3" />
        <rect x="7" y="7" width="39" height="19" rx="3" fill="#dedede" />
        <path d="M69 12v9" stroke="#3a3a3a" strokeWidth="4" strokeLinecap="round" />
        <text x="33" y="25" fontSize="24" fontWeight="500" textAnchor="middle" fill="#333">77</text>
      </svg>
    </StatusGroup>
  </StatusBar>
);

const TopHeader = () => (
  <Header>
    <HeaderSide $gap={22}>
      <IconButton aria-label="back">
        <svg width="30" height="52" viewBox="0 0 30 52" fill="none" stroke="#262626" strokeWidth="4.8"><path d="M27 2L3 26L27 50" /></svg>
      </IconButton>
      <Logo>东方<br />财富</Logo>
    </HeaderSide>
    <TitleBlock>
      <Title>国盛金控</Title>
      <Code>002670<Tag>融</Tag><Tag>深股通</Tag><Tag>L2</Tag><Down w={22} color="#ccc" /></Code>
    </TitleBlock>
    <HeaderSide $gap={42} $end>
      <IconButton aria-label="Ai">
        <svg width="68" height="68" viewBox="0 0 68 68">
          <circle cx="35" cy="34" r="32" fill="none" stroke="#3d6af2" strokeWidth="3.4" />
          <text x="15" y="47" fontSize="37" fontWeight="900" fill="#3d6af2">Ai</text>
          <path d="M48 13Q49 20 55 21Q49 22 48 29Q47 22 41 21Q47 20 48 13Z" fill="#3d6af2" stroke="#fff" />
        </svg>
      </IconButton>
      <IconButton aria-label="share">
        <svg width="54" height="54" viewBox="0 0 54 54" fill="none" stroke="#262626" strokeWidth="3.8">
          <path d="M22 3H6Q2 3 2 7V48Q2 52 6 52H48Q52 52 52 48V34M32 3H52V24M51 4L26 31" />
        </svg>
      </IconButton>
      <IconButton aria-label="search">
        <svg width="56" height="56" viewBox="0 0 56 56" fill="none" stroke="#262626" strokeWidth="3.8">
          <circle cx="27" cy="27" r="24" /><path d="M44 44L54 54" />
        </svg>
      </IconButton>
    </HeaderSide>
  </Header>
);

const QuoteBlock = () => (
  <Quote>
    <PriceBox>
      <Price>19.51</Price>
      <Cell><span>9.98%</span><span>1.77</span></Cell>
    </PriceBox>
    <Cell><Label>今开</Label><Value $red>18.64</Value></Cell>
    <Cell><Label>最高</Label><Value $red>19.51</Value></Cell>
    <Cell><Label>最低</Label><Value $red>18.10</Value></Cell>
    <Cell><Label>换手<Bubble /></Label><Value>10.72%</Value></Cell>
    <Cell><Label>总手</Label><Value>174.0万</Value></Cell>
    <Cell><Label>金额</Label><Value>32.67亿</Value></Cell>
    <Cell><Label>总值<Bubble /></Label><Value $small>377.5亿</Value></Cell>
    <Cell><Label>流值</Label><Value>316.7亿</Value></Cell>
    <Cell><Label>市盈<Sup>动</Sup><Bubble /></Label><Value $small>134.09</Value></Cell>
    <MoreButton>更多</MoreButton>
  </Quote>
);

const Footer = () => (
  <BottomBar>
    <IndexBox>
      <svg width="20" height="8" viewBox="0 0 20 8" fill="#888"><path d="M0 8L10 0L20 8Z" /></svg>
      <IndexValue>158947.95</IndexValue>
      <IndexLine><em>证券</em>1.03%</IndexLine>
    </IndexBox>
    <BottomItem>
      <svg width="62" height="58" viewBox="0 0 62 58" fill="none" stroke="#666" strokeWidth="3">
        <path d="M16 7A27 27 0 0 1 55 40L61 36M46 51A27 27 0 0 1 7 17L1 21" />
        <path d="M22 17L31 28L40 17M31 28V43M21 29H41M21 36H41" />
      </svg>
      交易
    </BottomItem>
    <BottomItem>
      <svg width="58" height="58" viewBox="0 0 58 58" fill="none" stroke="#666" strokeWidth="3">
        <path d="M40 4H10Q4 4 4 10V48Q4 54 10 54H48Q54 54 54 48V20" />
        <path d="M23 35L45 11L49 15L27 38L21 40Z" fill="#666" stroke="none" />
        <path d="M49 9L53 5" strokeWidth="6" strokeLinecap="round" />
      </svg>
      发帖
    </BottomItem>
    <BottomItem>
      <svg width="58" height="58" viewBox="0 0 58 58" fill="none" stroke="#666" strokeWidth="3">
        <rect x="6" y="6" width="20" height="20" rx="3" />
        <path d="M42 4L54 16L42 28L30 16Z" strokeLinejoin="round" />
        <rect x="6" y="33" width="20" height="20" rx="3" />
        <rect x="32" y="33" width="20" height="20" rx="3" />
      </svg>
      功能
    </BottomItem>
    <BottomItem>
      <svg width="58" height="58" viewBox="0 0 58 58" fill="none" stroke="#666" strokeWidth="3">
        <circle cx="29" cy="29" r="25" />
        <g fill="#666" stroke="none"><circle cx="18" cy="29" r="3" /><circle cx="29" cy="29" r="3" /><circle cx="40" cy="29" r="3" /></g>
      </svg>
      设自选
    </BottomItem>
  </BottomBar>
);

export default class App extends React.Component {
  constructor(props) {
    super(props);
    this.state = { period: '周K' };
  }

  render() {
    const { period } = this.state;
    return (
      <div>
        <GlobalStyle />
        <Status />
        <TopHeader />
        <Banner>
          <span>一键开通科创成长层权限！把握打新、交易机会</span>
          <IconButton aria-label="close"><Cross size={34} color="#dc5a12" /></IconButton>
        </Banner>
        <QuoteBlock />
        <Notice>
          <svg width="50" height="42" viewBox="0 0 50 42" fill="none" stroke="#d9681c" strokeWidth="3" strokeLinejoin="round">
            <path d="M22 2V40L12 32H4Q2 32 2 28V14Q2 10 4 10H12Z" />
            <path d="M29 12Q38 21 29 31M29 3Q46 3 46 21Q46 39 29 39" />
          </svg>
          <NoticeText>中报预披露：于2025-08-19披露2025年中报</NoticeText>
          <Dot />
          <IconButton aria-label="dismiss"><Cross size={26} color="#999" width={4} /></IconButton>
        </Notice>
        <Tabs>
          {['分时', '五日', '日K', '周K', '月K'].map(t => (
            <Tab key={t} $active={t === period} onClick={() => this.setState({ period: t })}>{t}</Tab>
          ))}
          <Tab $more>更多<Down w={14} /></Tab>
          <GearTab aria-label="settings"><Gear /></GearTab>
        </Tabs>
        <MaRow>
          <Picker name="均线" tight />
          <MaGrid>
            {maItems.map(([text, color]) => <Figure key={text} $color={color} $size={32}>{text}<Up /></Figure>)}
          </MaGrid>
          <ChipButton $solid $width={118}>
            DK点
            <svg width="11" height="26" viewBox="0 0 11 26" fill="#fff"><path d="M11 15V26H0Z" /></svg>
          </ChipButton>
          <ChipButton $width={124} $push="auto">前复权</ChipButton>
        </MaRow>
        <ChartArea>
          <div>
            <MainChart />
            <Panel name="MACD" next figures={[['DIF:1.04', '#262626'], ['DEA:0.54', '#e8c22a'], ['M:0.99', '#c832c8']]}>
              <MacdChart />
            </Panel>
            <Panel name="成交量" tight gap={5} figures={[['584.1万', '#262626'], ['MA1:401.3万', '#e8c22a'], ['MA2:407.3万', '#c832c8'], ['MA3:258.8万', '#1a8c1a']]}>
              <VolumeChart />
            </Panel>
            <Panel name="KDJ" gap={27} figures={[['K:74.66', '#262626'], ['D:63.46', '#e8c22a'], ['J:97.07', '#c832c8']]}>
              <KdjChart />
            </Panel>
            <Panel name="CCI" figures={[['166.32', '#262626']]}>
              <CciChart />
            </Panel>
            <Axis>
              <Ticks />
              <Dates><span>20240712</span><span>20250117</span><span>20250813</span></Dates>
            </Axis>
          </div>
          <div>
            <ChipChart />
            <ChipLegend>
              <span><Swatch $color="#58b848" />套牢</span>
              <span><Swatch $color="#e84848" />获利</span>
              <span><Swatch $color="#3080e4" />平均</span>
            </ChipLegend>
            <Stats>
              {statItems.map(([label, value]) => <StatRow key={label}>{label}<b>{value}</b></StatRow>)}
              <StatRow $last>
                <span>
                  说明
                  <svg width="37" height="37" viewBox="0 0 37 37">
                    <circle cx="18" cy="18" r="18" fill="#ccc" />
                    <circle cx="18" cy="10" r="3" fill="#fff" />
                    <path d="M18 16V28" stroke="#fff" strokeWidth="5" strokeLinecap="round" />
                  </svg>
                </span>
                <b>2025-08-13</b>
              </StatRow>
            </Stats>
          </div>
          <Controls>
            <RoundButton aria-label="fast back">
              <svg width="30" height="32" viewBox="0 0 30 32" fill="none" stroke="#e87030" strokeWidth="3"><path d="M15 2L2 16L15 30M28 2L15 16L28 30" /></svg>
            </RoundButton>
            <RoundButton aria-label="zoom out">
              <svg width="32" height="32" viewBox="0 0 32 32" stroke="currentColor" strokeWidth="3"><path d="M1 16H31" /></svg>
            </RoundButton>
            <RoundButton aria-label="zoom in">
              <svg width="32" height="32" viewBox="0 0 32 32" stroke="currentColor" strokeWidth="3"><path d="M1 16H31M16 1V31" /></svg>
            </RoundButton>
            <RoundButton aria-label="left">
              <svg width="18" height="32" viewBox="0 0 18 32" fill="none" stroke="currentColor" strokeWidth="3"><path d="M16 2L2 16L16 30" /></svg>
            </RoundButton>
            <RoundButton aria-label="right" $gray>
              <svg width="18" height="32" viewBox="0 0 18 32" fill="none" stroke="currentColor" strokeWidth="3"><path d="M2 2L16 16L2 30" /></svg>
            </RoundButton>
            <RoundButton aria-label="full screen">
              <svg width="32" height="32" viewBox="0 0 32 32" fill="none" stroke="currentColor" strokeWidth="3">
                <path d="M2 15V2H15M2 2L13 13M30 17V30H17M30 30L19 19" />
              </svg>
            </RoundButton>
          </Controls>
        </ChartArea>
        <Footer />
      </div>
    );
  }
}
